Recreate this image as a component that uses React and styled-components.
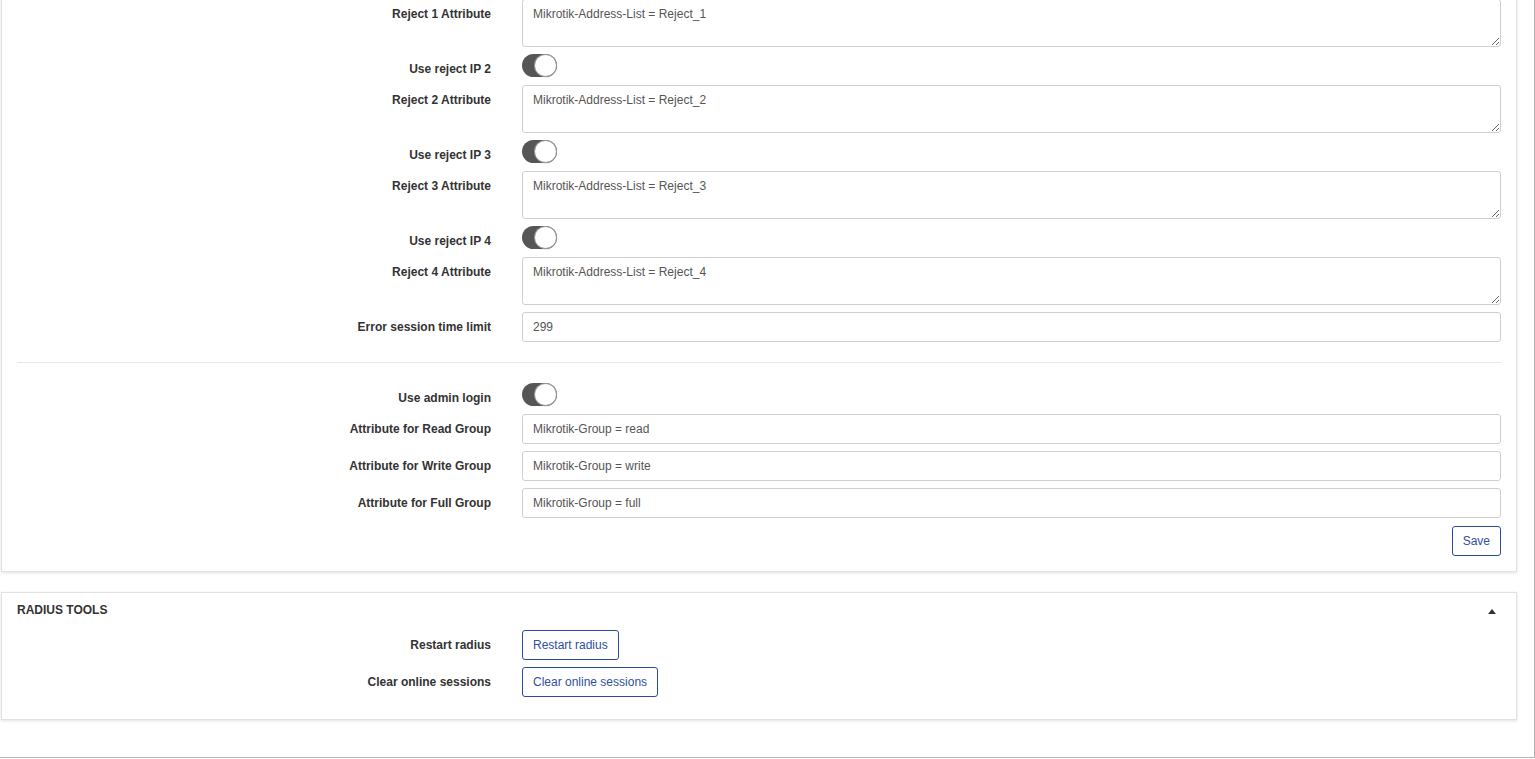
import React from "react";
import styled, { createGlobalStyle } from "styled-components";

const GlobalStyle = createGlobalStyle`
  html, body {
    margin: 0;
    padding: 0;
    background: #fff;
    font-family: "Liberation Sans", Arial, sans-serif;
    font-size: 12px;
    color: #333;
  }
  * { box-sizing: border-box; }
`;

const Frame = styled.div`
  width: 1535px;
  height: 758px;
  border-right: 1px solid #b4b4b4;
  border-bottom: 1px solid #b4b4b4;
  overflow: hidden;
  padding: 0 17px 0 1px;
`;

const Scroller = styled.div`
  margin-top: -17px;
  display: flex;
  flex-direction: column;
  gap: 20px;
`;

const Card = styled.section`
  background: #fff;
  border: 1px solid #e2e2e2;
  box-shadow: 0 1px 3px rgba(0, 0, 0, 0.12);
  padding: ${(p) => p.$pad || "15px"};
`;

const CardHead = styled.div`
  display: flex;
  align-items: center;
  justify-content: space-between;
  padding: 9px 0 0;
  margin-bottom: 12px;
  line-height: 16px;
  font-weight: bold;
  font-size: 12px;
  text-transform: uppercase;
  color: #333;
`;

const Caret = styled.span`
  width: 0;
  height: 0;
  margin-right: 5px;
  margin-top: 3px;
  border-left: 4.5px solid transparent;
  border-right: 4.5px solid transparent;
  border-bottom: 5px solid #333;
`;

const Row = styled.div`
  display: grid;
  grid-template-columns: 474px 1fr;
  column-gap: 31px;
  margin-bottom: 7px;
  min-height: ${(p) => (p.$toggle ? "24px" : "0")};
`;

const Label = styled.label`
  text-align: right;
  font-weight: bold;
  font-size: 12px;
  line-height: 16px;
  padding-top: 7px;
  color: #333;
`;

const Field = styled.div`
  display: flex;
  align-items: flex-start;
`;

const inputBase = `
  width: 100%;
  border: 1px solid #cfcfcf;
  border-radius: 3px;
  font-family: "Liberation Sans", Arial, sans-serif;
  font-size: 12px;
  color: #555;
  background: #fff;
  padding: 6px 10px;
  line-height: 16px;
  outline: none;
`;

const Input = styled.input`
  ${inputBase}
  height: 30px;
`;

const TextArea = styled.textarea`
  ${inputBase}
  height: 48px;
  resize: vertical;
  display: block;
`;

const Toggle = styled.span`
  position: relative;
  display: inline-block;
  width: 35px;
  height: 23px;
  border-radius: 12px;
  background: #565656;

  &::after {
    content: "";
    position: absolute;
    top: 1px;
    right: 1px;
    width: 21px;
    height: 21px;
    border-radius: 50%;
    background: #fff;
    box-shadow: 0 0 0 1px #9a9a9a, 0 1px 2px rgba(0, 0, 0, 0.3);
  }
`;

const Divider = styled.hr`
  border: 0;
  border-top: 1px solid #e8e8e8;
  margin: 20px 0 20px;
`;

const Actions = styled.div`
  display: flex;
  justify-content: flex-end;
  margin-top: 8px;
`;

const OutlineButton = styled.button`
  height: 30px;
  padding: 0 10px;
  background: #fff;
  border: 1px solid #2b4c9c;
  border-radius: 3px;
  color: #2f4fa3;
  font-family: "Liberation Sans", Arial, sans-serif;
  font-size: 12px;
  cursor: pointer;
`;

const rejects = [1, 2, 3, 4];

const adminGroups = [
  { label: "Attribute for Read Group", value: "Mikrotik-Group = read" },
  { label: "Attribute for Write Group", value: "Mikrotik-Group = write" },
  { label: "Attribute for Full Group", value: "Mikrotik-Group = full" },
];

const tools = ["Restart radius", "Clear online sessions"];

function App() {
  return (
    <>
      <GlobalStyle />
      <Frame>
        <Scroller>
          <Card>
            {rejects.map((n) => (
              <React.Fragment key={n}>
                {n > 1 && (
                  <Row $toggle>
                    <Label>Use reject IP {n}</Label>
                    <Field>
                      <Toggle />
                    </Field>
                  </Row>
                )}
                <Row>
                  <Label>Reject {n} Attribute</Label>
                  <Field>
                    <TextArea
                      defaultValue={`Mikrotik-Address-List = Reject_${n}`}
                    />
                  </Field>
                </Row>
              </React.Fragment>
            ))}
            <Row>
              <Label>Error session time limit</Label>
              <Field>
                <Input defaultValue="299" />
              </Field>
            </Row>

            <Divider />

            <Row $toggle>
              <Label>Use admin login</Label>
              <Field>
                <Toggle />
              </Field>
            </Row>
            {adminGroups.map((g) => (
              <Row key={g.label}>
                <Label>{g.label}</Label>
                <Field>
                  <Input defaultValue={g.value} />
                </Field>
              </Row>
            ))}
            <Actions>
              <OutlineButton>Save</OutlineButton>
            </Actions>
          </Card>

          <Card $pad="0 15px 15px">
            <CardHead>
              RADIUS TOOLS
              <Caret />
            </CardHead>
            {tools.map((t) => (
              <Row key={t}>
                <Label>{t}</Label>
                <Field>
                  <OutlineButton>{t}</OutlineButton>
                </Field>
              </Row>
            ))}
          </Card>
        </Scroller>
      </Frame>
    </>
  );
}

export default App;
